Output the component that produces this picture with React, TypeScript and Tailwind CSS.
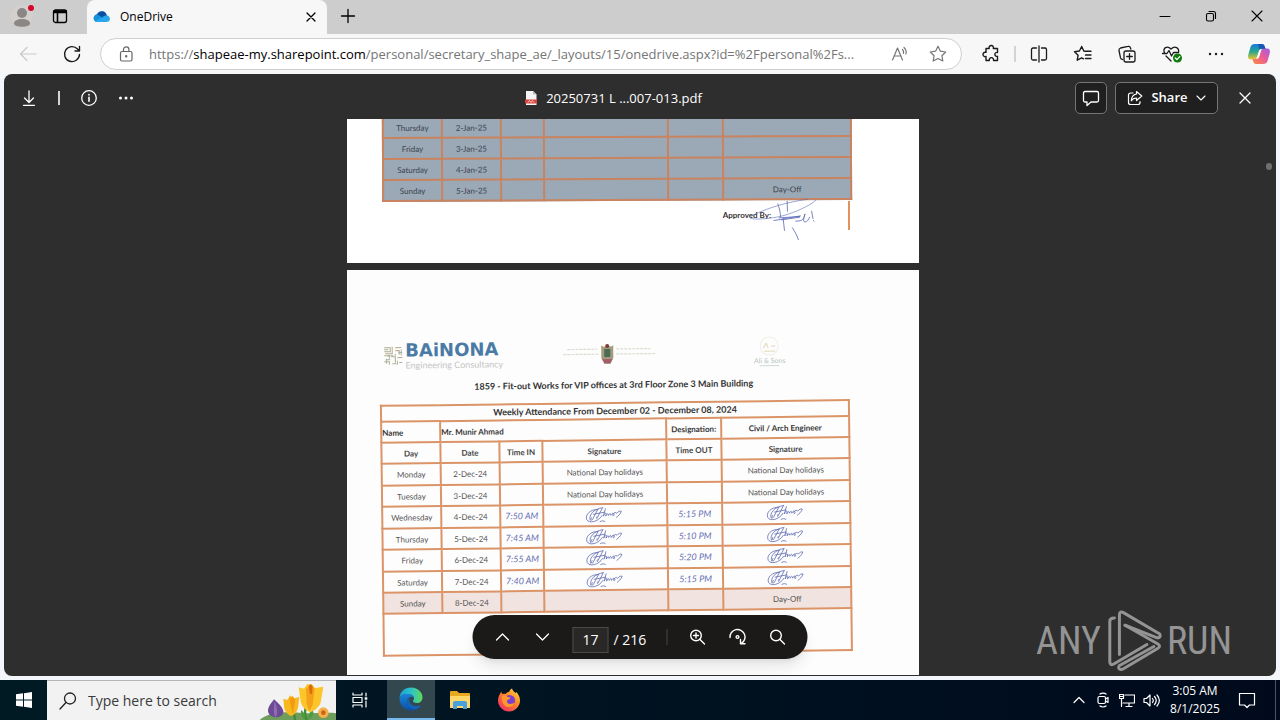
import React from "react";

type IconProps = { children: React.ReactNode; size?: string; box?: string; sw?: number };

function Icon({ children, size = "size-5", box = "0 0 20 20", sw = 1.1 }: IconProps) {
  return (
    <svg className={`${size} shrink-0`} viewBox={box} fill="none" stroke="currentColor" strokeWidth={sw} strokeLinecap="round" strokeLinejoin="round" aria-hidden="true">
      {children}
    </svg>
  );
}

function ToolButton({ label, children, className = "w-11" }: { label: string; children: React.ReactNode; className?: string }) {
  return (
    <button type="button" aria-label={label} className={`flex h-8 shrink-0 items-center justify-center ${className}`}>
      {children}
    </button>
  );
}

function TabStrip() {
  return (
    <header className="flex h-[34px] shrink-0 items-stretch bg-[#cdcdcd] text-black">
      <ToolButton label="Profile" className="w-11">
        <svg className="size-6" viewBox="0 0 24 24" aria-hidden="true">
          <circle cx="12" cy="12" r="11" fill="#d3d0cd" />
          <circle cx="12" cy="9" r="5" fill="#8b8785" />
          <path d="M4 19.500c0-3 3.500-4.500 8-4.500s8 1.500 8 4.500c0 2-3.500 3.300-8 3.300s-8-1.300-8-3.300z" fill="#8b8785" />
          <circle cx="21" cy="4" r="3" fill="#d4082e" />
        </svg>
      </ToolButton>
      <ToolButton label="Tab actions" className="mr-[11px] w-8">
        <Icon size="size-4" box="0 0 16 16" sw={1.3}>
          <rect x="1.500" y="2" width="13" height="12.500" rx="2" />
          <path d="M2 3h12M2 4.500h12M5.500 5v9" strokeWidth="1.600" />
        </Icon>
      </ToolButton>
      <div className="flex w-60 items-center rounded-t-lg bg-[#f7f7f7] pl-[6px] pr-2">
        <svg className="h-4 w-[18px]" viewBox="0 0 36 24" aria-hidden="true">
          <path d="M9 22a8 8 0 0 1-1-15.500A10 10 0 0 1 27 8l2 5-20 9z" fill="#0f62c0" />
          <path d="M8 7c5-1 10 2 20 9l-20 6A7.500 7.500 0 0 1 2 11c1-2 3-3.500 6-4z" fill="#1490df" />
          <path d="M4 20l15-7c3-5 9-6 13-2 4 5 1 11-5 11H9c-2 0-4-1-5-2z" fill="#28a8ea" />
          <path d="M13 3c6-4 13-1 14.500 6-4-1-7 1-8.500 4L9 7z" fill="#0c4f9e" />
        </svg>
        <span className="ml-[9px] flex-1 text-[12px] leading-4">OneDrive</span>
        <button type="button" aria-label="Close tab" className="flex size-4 items-center justify-center">
          <Icon size="size-3" box="0 0 12 12" sw={1.3}><path d="M2 2l8 8M10 2l-8 8" /></Icon>
        </button>
      </div>
      <ToolButton label="New tab" className="w-[42px]">
        <Icon size="size-4" box="0 0 16 16" sw={1.300}><path d="M8 1.500v13M1.500 8h13" /></Icon>
      </ToolButton>
      <div className="flex-1" />
      <ToolButton label="Minimize" className="w-[46px]">
        <Icon size="size-3" box="0 0 12 12" sw={1}><path d="M1 6.500h10" /></Icon>
      </ToolButton>
      <ToolButton label="Restore" className="w-[46px]">
        <Icon size="size-3" box="0 0 12 12" sw={1.100}>
          <rect x="1.500" y="3.500" width="7" height="7.500" rx="1.500" />
          <path d="M4 1.500h4.500a2 2 0 0 1 2 2V8.500" />
        </Icon>
      </ToolButton>
      <ToolButton label="Close" className="w-[46px]">
        <Icon size="size-3" box="0 0 12 12" sw={1.100}><path d="M1 1l10 10M11 1L1 11" /></Icon>
      </ToolButton>
    </header>
  );
}

function AddressBar() {
  return (
    <div className="flex h-10 shrink-0 items-center bg-[#f7f7f7] pl-[6px] text-[#1b1b1b]">
      <ToolButton label="Back">
        <span className="text-[#c9c9c9]"><Icon sw={1.200}><path d="M18 10H2.500M9 3.500L2.500 10l6.500 6.500" /></Icon></span>
      </ToolButton>
      <ToolButton label="Refresh">
        <Icon sw={1.400}><path d="M17.500 10.500A7.500 7.500 0 1 1 15.500 5l2 2M17.500 2.500V7H13" /></Icon>
      </ToolButton>
      <div className="ml-[6px] flex h-8 min-w-0 flex-1 items-center rounded-full border border-[#cfcfcf] bg-white pl-[17px] pr-[5px]">
        <span className="mr-[15px] text-[#666]">
          <Icon size="size-4" box="0 0 16 16" sw={1.200}>
            <rect x="2.500" y="5.500" width="11.500" height="9.500" rx="1.500" />
            <path d="M5.500 5.500V3.500a2.700 2.700 0 0 1 5.400 0v2" />
            <circle cx="8.200" cy="10.300" r="0.600" fill="currentColor" />
          </Icon>
        </span>
        <a href="#document" className="min-w-0 flex-1 truncate text-[13px] leading-5 text-[#757575]">
          https://<span className="text-black">shapeae-my.sharepoint.com</span>/personal/secretary_shape_ae/_layouts/15/onedrive.aspx?id=%2Fpersonal%2Fs...
        </a>
        <span className="flex pl-2 text-[#767676]">
          <ToolButton label="Read aloud" className="w-10">
            <Icon sw={1.200}>
              <path d="M2.500 16L7.500 4l5 12M4.300 12h6.400M12.500 5.500c1 1 1.300 2.200 1 3.800M14 3.500c1.900 1.700 2.500 4 2 6.500" />
            </Icon>
          </ToolButton>
          <ToolButton label="Add to favorites" className="w-9">
            <Icon sw={1.200}><path d="M10 2.300l2.400 4.900 5.300.8-3.800 3.700.9 5.300-4.800-2.500L5.200 17l.9-5.300L2.300 8l5.300-.8z" /></Icon>
          </ToolButton>
        </span>
      </div>
      <div className="ml-[7px] flex items-center">
        <ToolButton label="Extensions">
          <Icon sw={1.400}>
            <path d="M5 4.500h3.200a2.200 2.200 0 1 1 4.100 0H16.500v4a2 2 0 1 0 0 3.800V16.500h-4a2.200 2.200 0 1 0-4.200 0H5v-4a2.200 2.200 0 1 1 0-4.100z" />
          </Icon>
        </ToolButton>
        <span className="mx-[1px] h-4 w-[2px] bg-[#d3d3d3]" />
        <ToolButton label="Split screen">
          <Icon sw={1.300}><path d="M10 2v16M7.500 4H4a1.500 1.500 0 0 0-1.500 1.500v9A1.500 1.500 0 0 0 4 16h3.500M12.500 4H16a1.500 1.500 0 0 1 1.500 1.500v9A1.500 1.500 0 0 1 16 16h-3.500" /></Icon>
        </ToolButton>
        <ToolButton label="Favorites">
          <Icon sw={1.400}><path d="M12 7.300H18M12.500 11H18M12.500 14.500H18M12 7.200L10.800 7 8.700 2.500 6.400 7l-4.900.7 3.600 3.500-.9 5 4.500-2.400 1.800 1" /></Icon>
        </ToolButton>
        <ToolButton label="Collections">
          <Icon sw={1.300}>
            <rect x="7" y="7" width="11" height="11" rx="2" />
            <path d="M12.500 9.700v5.600M9.700 12.500h5.600M5.500 15.500c-1 0-1.700-.7-2-1.600L2 6.500C1.800 5.300 2.400 4.400 3.500 4l7.500-1.600c1.200-.3 2.200.4 2.500 1.600l.3 1.200" />
          </Icon>
        </ToolButton>
        <ToolButton label="Browser essentials">
          <Icon size="size-6" box="-1 0 24 24" sw={1.300}>
            <path d="M4.500 11C2.500 6 7 3 11 7c4-4 8.500-1 7.500 3.500M6 14l5 5M2.500 11.500H7l2-3 2.500 5.500 2-3.500h4" />
            <circle cx="17.500" cy="16" r="4.500" fill="#107c10" stroke="none" />
            <path d="M15.300 16l1.600 1.600 2.800-3" stroke="white" />
          </Icon>
        </ToolButton>
        <ToolButton label="Settings and more">
          <Icon sw={0}>
            <g fill="currentColor"><circle cx="5" cy="10" r="1.200" /><circle cx="11" cy="10" r="1.200" /><circle cx="17" cy="10" r="1.200" /></g>
          </Icon>
        </ToolButton>
        <ToolButton label="Copilot" className="w-[43px]">
          <svg className="size-6" viewBox="0 0 24 24" aria-hidden="true">
            <defs>
              <linearGradient id="cpA" x1="0" y1="0" x2="0" y2="1"><stop offset="0" stopColor="#1679db" /><stop offset=".5" stopColor="#29a88d" /><stop offset="1" stopColor="#f4c42e" /></linearGradient>
              <linearGradient id="cpB" x1="1" y1="0" x2="0" y2="1"><stop offset="0" stopColor="#a05be8" /><stop offset=".5" stopColor="#ee5c93" /><stop offset="1" stopColor="#fb8b3c" /></linearGradient>
            </defs>
            <path d="M8 2h7c1.500 0 2.300 1 2.700 2.500L18.500 7H15c-2 0-3 1-3.500 3L10 15c-.4 1.600-1.200 2.500-3 2.500H4C1.500 17.500.6 15.500 1.200 13L3.500 5C4 3 5.500 2 8 2z" fill="url(#cpA)" />
            <path d="M16 22H9c-1.500 0-2.300-1-2.700-2.500L5.500 17H9c2 0 3-1 3.500-3L14 9c.4-1.600 1.200-2.500 3-2.500h3c2.500 0 3.400 2 2.800 4.500L20.500 19c-.5 2-2 3-4.500 3z" fill="url(#cpB)" />
            <path d="M11 2h4c1.500 0 2.300 1 2.700 2.500l.8 2.300H15c-1 0-1.800.3-2.400 1z" fill="#1857b8" />
            <path d="M10.500 15l2-6.500c.4-1 1-1.500 2-1.500-.5.600-.7 1.200-1 2l-1.600 5.500c-.3 1.300-.8 2-1.900 2.500z" fill="#fff" />
          </svg>
        </ToolButton>
      </div>
    </div>
  );
}

function ViewerHeader() {
  return (
    <div className="flex h-[45px] shrink-0 items-center pt-[2px] text-white">
      <div className="flex w-[147px] items-center">
        <ToolButton label="Download" className="ml-[5px] w-10">
          <Icon size="size-4" box="0 0 16 16" sw={1.300}><path d="M8 1v11M3.500 8L8 12.500 12.500 8M2.500 15.300h11" /></Icon>
        </ToolButton>
        <svg className="mx-[9px] h-4 w-[2px]" viewBox="0 0 2 16" aria-hidden="true"><path d="M1 1v14" stroke="currentColor" strokeWidth="1.600" /></svg>
        <ToolButton label="Information" className="w-10">
          <Icon size="size-4" box="0 0 16 16" sw={1.300}><circle cx="8" cy="8" r="7.300" /><path d="M8 7.200v4M8 4.600v.3" strokeWidth="1.600" /></Icon>
        </ToolButton>
        <ToolButton label="More actions" className="w-[34px]">
          <Icon size="size-4" box="0 0 16 16" sw={0}><g fill="currentColor"><circle cx="2.500" cy="8" r="1.500" /><circle cx="8" cy="8" r="1.500" /><circle cx="13.500" cy="8" r="1.500" /></g></Icon>
        </ToolButton>
      </div>
      <h1 className="flex min-w-0 flex-1 items-center justify-center gap-2 text-[13px] font-medium leading-5">
        <svg className="h-4 w-[14px]" viewBox="0 0 14 16" aria-hidden="true">
          <path d="M2 1h7l3.500 3.500V15H2z" fill="#f4f4f4" />
          <path d="M9 1v3.500h3.500z" fill="#bdbdbd" />
          <rect x="1" y="9.500" width="12" height="4" rx="1" fill="#d9453c" />
          <path d="M4 12.500l1.500-2 1.500 2 1.500-2 1.500 2" stroke="#f9d5d2" strokeWidth="0.800" fill="none" />
        </svg>
        <span>20250731 L ...007-013.pdf</span>
      </h1>
      <div className="flex items-center">
        <button type="button" aria-label="Comments" className="flex size-8 items-center justify-center rounded-[5px] border border-[#757575] bg-[#1f1f1f]">
          <Icon size="size-[18px]" box="0 0 18 18" sw={1.300}><path d="M3 2.500h12A1.500 1.500 0 0 1 16.500 4v7.500A1.500 1.500 0 0 1 15 13H9l-4 3.500V13H3a1.500 1.500 0 0 1-1.500-1.500V4A1.500 1.500 0 0 1 3 2.500z" /></Icon>
        </button>
        <button type="button" className="ml-2 flex h-8 w-[103px] items-center justify-center gap-2 rounded-[5px] border border-[#757575] bg-[#1f1f1f] text-[13px] font-semibold">
          <Icon size="size-4" box="0 0 16 16" sw={1.200}>
            <path d="M6 3H3.500A2 2 0 0 0 1.500 5v7.500a2 2 0 0 0 2 2H11a2 2 0 0 0 2-2V11.500M9.500 1.500L14.800 6l-5.300 4.500V8C7 8 5.500 8.800 4.300 10.800 4.500 7 6.500 4.500 9.500 4z" />
          </Icon>
          Share
          <Icon size="size-[10px]" box="0 0 10 10" sw={1.100}><path d="M1 3l4 4 4-4" /></Icon>
        </button>
        <ToolButton label="Close viewer" className="ml-[7px] mr-[11px] w-10">
          <Icon size="size-3" box="0 0 12 12" sw={1.300}><path d="M1 1l10 10M11 1L1 11" /></Icon>
        </ToolButton>
      </div>
    </div>
  );
}

function Columns() {
  return (
    <colgroup>
      <col className="w-[59px]" />
      <col className="w-[59px]" />
      <col className="w-[43px]" />
      <col className="w-[124px]" />
      <col className="w-[55px]" />
      <col className="w-[128px]" />
    </colgroup>
  );
}

const januaryDays = [
  ["Thursday", "2-Jan-25"],
  ["Friday", "3-Jan-25"],
  ["Saturday", "4-Jan-25"],
  ["Sunday", "5-Jan-25"],
];

const edge = "border-2 border-[#c9835f] p-0";

function JanuaryPage() {
  return (
    <section className="flex h-[144px] w-[572px] shrink-0 flex-col justify-end overflow-hidden bg-white pl-[35px] font-['Lato',sans-serif] text-[8px] leading-[10px] text-[#3a4450]">
      <div className="w-[468px] shrink-0 -rotate-[0.25deg]">
        <table className="w-full table-fixed border-collapse bg-[#9ba8b5] text-center">
          <Columns />
          <tbody>
            {januaryDays.map(([day, date]) => (
              <tr key={day} className="h-[21px]">
                <td className={edge}>{day}</td>
                <td className={edge}>{date}</td>
                <td className={edge} />
                <td className={edge} />
                <td className={edge} />
                <td className={edge}>{day === "Sunday" ? "Day-Off" : ""}</td>
              </tr>
            ))}
          </tbody>
        </table>
      </div>
      <div className="relative mb-[33px] h-[29px] w-[468px] shrink-0 border-r-2 border-[#e0925f] pt-[9px] text-right font-bold text-[#333]">
        <p className="pr-[77px]">Approved By:</p>
        <svg className="absolute -top-[5px] right-[28px] h-[48px] w-[77px]" viewBox="340 260 230 145" fill="none" stroke="#5b6ab8" strokeWidth="2.500" strokeLinecap="round" aria-hidden="true">
          <path d="M535 270C450 280 375 312 360 324c-6 10 70 6 112-8 45-15 75-32 88-44" strokeWidth="1.800" />
          <path d="M444 284c4 12 8 24 8 38M472 276l1 30M460 328l4 36M488 356c8 12 14 24 18 36" />
          <path d="M432 334c30-4 55-10 80-14M448 326l62-4M455 332l55-8M498 336c14 0 22-2 26-14l2-8c-4 12-6 22-2 24 8 2 12-6 16-14M546 306l4 22M552 334l1 2" />
        </svg>
      </div>
    </section>
  );
}

function Signature() {
  return (
    <svg className="mx-auto h-[18px] w-[37px]" viewBox="0 0 110 54" fill="none" stroke="#6670b4" strokeWidth="2.500" strokeLinecap="round" strokeLinejoin="round" role="img" aria-label="Signed">
      <path d="M38 10C14 8-2 26 4 40c6 12 34 8 46-12M14 42C8 26 26 8 50 5M36 12L22 38c-4 8-8 2-4-4M52 4L36 34c-2 6-4 2-2-2M24 24l34-6" />
      <path d="M60 8l-6 22c4-10 8-12 8-6l-1 6c5-9 8-9 8-2 4-8 7-7 7 0 4-8 9-8 10-2 1 4-6 4-4-1 4-6 10-7 12-3 4-5 10-8 14-6-4 10-10 14-15 18M44 46c6-3 10-2 14 0" />
    </svg>
  );
}

type Entry = { day: string; date: string; timeIn?: string; timeOut?: string; note?: string };

const entries: Entry[] = [
  { day: "Monday", date: "2-Dec-24", note: "National Day holidays" },
  { day: "Tuesday", date: "3-Dec-24", note: "National Day holidays" },
  { day: "Wednesday", date: "4-Dec-24", timeIn: "7:50 AM", timeOut: "5:15 PM" },
  { day: "Thursday", date: "5-Dec-24", timeIn: "7:45 AM", timeOut: "5:10 PM" },
  { day: "Friday", date: "6-Dec-24", timeIn: "7:55 AM", timeOut: "5:20 PM" },
  { day: "Saturday", date: "7-Dec-24", timeIn: "7:40 AM", timeOut: "5:15 PM" },
];

const line = "border-2 border-[#db9467] p-0";
const signed = "border-2 border-[#db9467] p-0 pr-1";
const written = "border-2 border-[#db9467] p-0 text-[9px] italic text-[#6670b4] whitespace-nowrap";

function Letterhead() {
  return (
    <div className="flex h-[38px] items-center justify-between">
      <div className="flex items-center pl-1">
        <svg className="h-5 w-5" viewBox="0 0 20 20" fill="none" strokeWidth="1" aria-hidden="true">
          <path d="M1 2h6v4H1M9 1v7H2M12 2h6M12 5h4v4M1 10h5v3M8 11h4v6M1 16h5v3M14 12h5M14 15v4" stroke="#b8a98c" />
          <path d="M18 4v6M10 10H4M3 13v5M9 18h4M16 17h3M12 8v2M1 4h4M15 7h4M7 14H3" stroke="#9db49f" />
        </svg>
        <div className="ml-[2px]">
          <p className="font-['DejaVu_Sans',sans-serif] text-[18px] font-bold leading-[18px] text-[#4a7ba6]">BAiNONA</p>
          <p className="text-[9px] leading-[11px] text-[#c4c4c4]">Engineering Consultancy</p>
        </div>
      </div>
      <svg className="mr-10 h-6 w-[100px]" viewBox="0 0 100 24" aria-hidden="true">
        <path d="M9 8h30M5 13h35M58 8h34M58 13h39" stroke="#dedccf" strokeWidth="1.200" strokeDasharray="3 1" />
        <path d="M43 4c2 2 3 2 6 0 3 2 4 2 6 0v13l-3 6h-6l-3-6z" fill="#a39c7a" />
        <path d="M46 8h6v8h-6z" fill="#4c6b55" />
        <circle cx="49" cy="5" r="2" fill="#7d3b3b" />
        <path d="M44 18h10l-2 4h-6z" fill="#a65b6d" />
      </svg>
      <div className="mr-[62px] flex flex-col items-center text-[7px] leading-[8px] text-[#b4c4c0]">
        <svg className="h-5 w-7" viewBox="0 0 28 20" fill="none" aria-hidden="true">
          <circle cx="14" cy="10" r="9" stroke="#f1eee2" />
          <path d="M8 12l3-5 2 5M16 10h4M9 15h11" stroke="#e0d6b6" />
        </svg>
        <span>Ali &amp; Sons</span>
        <svg className="h-[3px] w-5" viewBox="0 0 20 3" aria-hidden="true"><path d="M0 1.500h20" stroke="#ccdad6" /></svg>
      </div>
    </div>
  );
}

function DecemberPage() {
  return (
    <section className="min-h-0 w-[572px] flex-1 overflow-hidden bg-[#fdfdfd] pl-[34px] pt-16 font-['Lato',sans-serif] text-[8px] leading-[10px] text-[#555]">
      <div className="w-[468px] -rotate-[0.7deg]">
        <Letterhead />
        <h2 className="mt-[6px] mb-[11px] text-center text-[9px] font-bold leading-[13px] text-[#333]">
          1859 - Fit-out Works for VIP offices at 3rd Floor Zone 3 Main Building
        </h2>
        <table className="w-full table-fixed border-collapse text-center">
          <Columns />
          <tbody>
            <tr className="h-4 text-[9px] text-[#333]">
              <th colSpan={6} className={line}>Weekly Attendance From December 02 - December 08, 2024</th>
            </tr>
            <tr className="h-[21px] text-[#333]">
              <th className={`${line} text-left`}>Name</th>
              <th colSpan={3} className={`${line} text-left`}>Mr. Munir Ahmad</th>
              <th className={line}>Designation:</th>
              <th className={line}>Civil / Arch Engineer</th>
            </tr>
            <tr className="h-[21px] text-[#444]">
              <th className={line}>Day</th>
              <th className={line}>Date</th>
              <th className={line}>Time IN</th>
              <th className={line}>Signature</th>
              <th className={line}>Time OUT</th>
              <th className={line}>Signature</th>
            </tr>
            {entries.map((e, i) => (
              <tr key={e.day} className={i % 2 ? "h-[21px]" : "h-[22px]"}>
                <td className={line}>{e.day}</td>
                <td className={line}>{e.date}</td>
                <td className={written}>{e.timeIn}</td>
                <td className={e.note ? line : signed}>{e.note ?? <Signature />}</td>
                <td className={written}>{e.timeOut}</td>
                <td className={e.note ? line : signed}>{e.note ?? <Signature />}</td>
              </tr>
            ))}
            <tr className="h-[21px] bg-[#f1e3e0]">
              <td className={line}>Sunday</td>
              <td className={line}>8-Dec-24</td>
              <td className={line} />
              <td className={line} />
              <td className={line} />
              <td className={line}>Day-Off</td>
            </tr>
            <tr className="h-[42px]">
              <td colSpan={6} className={line} />
            </tr>
          </tbody>
        </table>
      </div>
    </section>
  );
}

function PageControls() {
  return (
    <div className="absolute bottom-[17px] left-1/2 flex h-11 w-[335px] -translate-x-1/2 items-center rounded-full bg-[#1b1a19] pl-[10px] text-white shadow-lg">
      <ToolButton label="Previous page" className="w-10">
        <Icon size="size-[14px]" box="0 0 14 14" sw={1.300}><path d="M1 10l6-6 6 6" /></Icon>
      </ToolButton>
      <ToolButton label="Next page" className="w-10">
        <Icon size="size-[14px]" box="0 0 14 14" sw={1.300}><path d="M1 4l6 6 6-6" /></Icon>
      </ToolButton>
      <label className="ml-[10px] mt-[5px] flex items-center text-[14px] leading-5">
        <input aria-label="Page number" defaultValue="17" className="h-[26px] w-9 border border-[#4a4a4a] bg-[#292827] text-center text-[14px] text-white" />
        <span className="ml-[5px] w-10 whitespace-nowrap">/ 216</span>
      </label>
      <span className="ml-[13px] h-4 w-px bg-[#444]" />
      <ToolButton label="Zoom in" className="ml-[10px] w-10">
        <Icon size="size-4" box="0 0 16 16" sw={1.400}><circle cx="6.500" cy="6.500" r="5.300" /><path d="M10.500 10.500l4.500 4.500M6.500 4v5M4 6.500h5" /></Icon>
      </ToolButton>
      <ToolButton label="Rotate" className="w-10">
        <Icon size="size-[18px]" box="0 0 18 18" sw={1.400}><path d="M1.500 9.500A7.500 7.500 0 1 1 13 15.300M12 11.500v4.300h4.500" /><circle cx="9" cy="9" r="1.400" /></Icon>
      </ToolButton>
      <ToolButton label="Find in document" className="w-10">
        <Icon size="size-4" box="0 0 16 16" sw={1.400}><circle cx="6.500" cy="6.500" r="5.300" /><path d="M10.500 10.500l4.500 4.500" /></Icon>
      </ToolButton>
    </div>
  );
}

function Watermark() {
  return (
    <div className="absolute bottom-1 right-[44px] flex h-[62px] items-center font-['Roboto_Condensed','Liberation_Sans_Narrow',Roboto,sans-serif] text-[38px] leading-none text-[#949494]">
      <span>ANY</span>
      <svg className="ml-[6px] mr-1 h-[62px] w-[56px]" viewBox="268 28 168 187" fill="none" stroke="currentColor" strokeWidth="9" strokeLinejoin="round" strokeLinecap="round" aria-hidden="true">
        <path d="M290 52c-8 0-14 2-14 10v122c0 8 5 11 12 7l100-59" />
        <path d="M305 162V42c0-8 5-10 12-6l106 62c8 4 6 14-4 14L322 74" />
        <path d="M322 74l98 56c8 5 8 9 0 14l-104 62c-8 4-16 0-12-10l105-58" />
      </svg>
      <span>RUN</span>
    </div>
  );
}

function Flowers() {
  return (
    <svg className="h-[38px] w-[77px] shrink-0 self-end" viewBox="745 34 231 114" preserveAspectRatio="xMidYMax meet" aria-hidden="true">
      <path d="M745 150c20-22 70-28 120-24s90-2 111 2v22z" fill="#6f9e5c" />
      <path d="M848 120l6 30M888 100c-8 20-4 34 0 50" stroke="#3e8b3a" strokeWidth="7" fill="none" />
      <path d="M905 120c8 4 2 20-12 28 0-14 2-24 12-28zM872 118c10 8 14 20 12 30-10-6-16-16-12-30z" fill="#4b9d3f" />
      <path d="M790 86c-8 12-18 20-18 36 2 14 16 18 26 18 12-2 22-8 20-20-4-12-14-22-28-34z" fill="#6c4a94" />
      <path d="M790 90c2 14-4 34 4 50 8-8 8-30-4-50z" fill="#8e6bb5" />
      <path d="M818 84l12 4 8-14 10 10 18-6-4 34c-4 14-12 22-20 24-12-4-22-16-22-30z" fill="#f8b91e" />
      <path d="M836 84l10-8 8 12-8 44z" fill="#f39a12" />
      <path d="M864 50l16 4 10-14 14 2 10 10 24-4-8 48c-6 16-22 26-32 28-14-4-26-18-28-32z" fill="#fcc62a" />
      <path d="M886 54l14-12 12 14-6 46-10 20-8-22z" fill="#f5a01a" />
      <path d="M894 46l6-6 6 6-2 24h-6z" fill="#d96c0c" />
      <circle cx="938" cy="126" r="16" fill="#f6b04a" />
      <circle cx="938" cy="126" r="7" fill="#c8641c" />
    </svg>
  );
}

function Taskbar() {
  return (
    <footer className="flex h-10 shrink-0 items-stretch bg-linear-to-r from-[#001a24] to-[#000a1c] text-white">
      <button type="button" aria-label="Start" className="flex w-[47px] items-center justify-center">
        <svg className="size-4" viewBox="0 0 16 16" fill="white" aria-hidden="true">
          <path d="M0 2.300l7-1v6.300H0zM8 1.200L16 0v7.600H8zM0 8.500h7v6.300l-7-1zM8 8.500h8V16l-8-1.200z" />
        </svg>
      </button>
      <label className="flex w-[289px] items-center border-t border-[#b5b5b5] bg-[#f2f2f2] pl-3 text-[#222]">
        <Icon size="size-[18px]" box="0 0 18 18" sw={1.300}><circle cx="11" cy="6.500" r="5.500" /><path d="M7 10.500L1 17" /></Icon>
        <input type="text" aria-label="Search" placeholder="Type here to search" className="ml-[11px] min-w-0 flex-1 bg-transparent text-[14px] leading-5 placeholder:text-[#3a3a3a]" />
        <Flowers />
      </label>
      <button type="button" aria-label="Task view" className="flex w-[51px] items-center justify-center pr-[3px]">
        <Icon size="size-4" box="0 0 16 16" sw={1.200}>
          <path d="M1 1v2h9V1M1 5.500h9v5H1zM1 15v-2h9v2M14 1v3M14 9v6" />
          <path d="M12.700 5.300h2.600v2.400h-2.600z" fill="currentColor" strokeWidth="0" />
        </Icon>
      </button>
      <button type="button" aria-label="Microsoft Edge" className="flex w-12 items-center justify-center border-b-2 border-[#76b9ed] bg-[#33474f]">
        <svg className="size-6" viewBox="0 0 24 24" aria-hidden="true">
          <defs>
            <linearGradient id="edTop" x1="0" y1="0" x2="1" y2="0"><stop offset="0" stopColor="#1c9fe0" /><stop offset=".55" stopColor="#2fc5c0" /><stop offset="1" stopColor="#62d95a" /></linearGradient>
            <linearGradient id="edLow" x1="0" y1="0" x2="0" y2="1"><stop offset="0" stopColor="#1a86d8" /><stop offset="1" stopColor="#0c4fa5" /></linearGradient>
          </defs>
          <path d="M.5 11C1 4.500 6 .5 12 .5 18.500.5 23.500 5 23.500 10.500c0 3.500-2.500 5.500-5.500 5.500-2.500 0-4-1-4-2 0-.8 1-1 1-2.800C15 9 12.500 7 9 7 5 7 1.500 8.500.5 11z" fill="url(#edTop)" />
          <path d="M.5 11C1.500 8.500 5 7 9 7c3.500 0 6 2 6 4.200-1-1.200-2.500-1.600-4-1.200-2.500.8-3.500 3-3 5.500.8 4 4.500 6 8.500 5.500 2-.3 3.500-1 4.500-1.500-2 2.800-5.500 4.200-9 4C5.500 23.500.2 18 .5 11z" fill="url(#edLow)" />
          <path d="M8 15.500C7.500 13 9 10.500 11 10c-1.500 2-1 6.500 3 8.500 2.500 1.200 5 .8 7 0 .5-.2.800.2.500.6C20 21 18.500 21.500 16.500 22 12 22 8.800 19.500 8 15.500z" fill="#1563b8" />
        </svg>
      </button>
      <button type="button" aria-label="File Explorer" className="flex w-[49px] items-center justify-center">
        <svg className="h-5 w-[22px]" viewBox="0 0 22 20" aria-hidden="true">
          <path d="M1 2a1 1 0 0 1 1-1h6l2 2h10a1 1 0 0 1 1 1v14H1z" fill="#e8a820" />
          <path d="M1 6h20v12H1z" fill="#ffd869" />
          <path d="M4 19v-6a2 2 0 0 1 2-2h10a2 2 0 0 1 2 2v6h-4v-3H8v3z" fill="#4aa0dc" />
        </svg>
      </button>
      <button type="button" aria-label="Firefox" className="flex w-[50px] items-center justify-center">
        <svg className="size-6" viewBox="0 0 24 24" aria-hidden="true">
          <defs>
            <linearGradient id="ffx" x1="1" y1="0" x2=".2" y2="1"><stop offset="0" stopColor="#ffe34a" /><stop offset=".45" stopColor="#ff8a25" /><stop offset="1" stopColor="#f02c6b" /></linearGradient>
          </defs>
          <path d="M4.500 3.500c0 1.500.3 2 1 2.500 1-.3 2-.4 3 0C9.500 4.500 11 4 12 4c1-2 1.500-3 3-3.500.5 2 2 3 3.500 4.500l1-1c2 2.500 3.500 5 3.500 8.500C23 18.500 18 23.500 12 23.500S1 18.500 1 12.500C1 9 2.500 6 4.500 3.500z" fill="url(#ffx)" />
          <circle cx="12.500" cy="12.500" r="5.500" fill="#7a3fd0" />
          <path d="M5 8.500c2-1.500 4-1 5.500.5 1.500.2 2.500.5 3 1-1 1.500-2.500 1.500-3.500 2.500-.5 2 1 3.500 3 3.500 2 0 3-1 4.500-1-1 3-3.500 4.500-6.500 4-4-.5-6.500-5-6-10.500z" fill="#ff9a2a" />
        </svg>
      </button>
      <div className="flex-1" />
      <div className="flex items-center" aria-label="System tray">
        <ToolButton label="Show hidden icons" className="w-6"><Icon size="size-3" box="0 0 12 12" sw={1.200}><path d="M1 8.500l5-5 5 5" /></Icon></ToolButton>
        <ToolButton label="Camera" className="w-6">
          <Icon size="size-4" box="0 0 16 16" sw={1.200}><rect x="3" y="4.500" width="7.500" height="7" rx="1.500" /><path d="M10.500 7l2.500-1.500v5L10.500 9M5 2c1.500-1.300 4.500-1.300 6 0M5 14c1.500 1.300 4.500 1.300 6 0" /></Icon>
        </ToolButton>
        <ToolButton label="Network" className="w-6">
          <Icon size="size-4" box="0 0 16 16" sw={1.200}><path d="M6 3h9.500v8H4M10 11v3.500M7 14.500h6M.5 2.500h4v4h-4zM2.500 6.500v8M.5 4.500h4" /></Icon>
        </ToolButton>
        <ToolButton label="Volume" className="w-6">
          <Icon size="size-[17px]" box="0 0 17 17" sw={1.200}><path d="M1 6.500h2.500L7 3v11L3.500 10.500H1zM9.500 6.500c1 1.300 1 2.700 0 4M11.500 4.500c2.200 2.500 2.200 5.500 0 8M14 3c3 3.500 3 7.500 0 11" /></Icon>
        </ToolButton>
        <div className="w-16 text-center text-[12px] leading-[18px]">
          <p>3:05 AM</p>
          <p>8/1/2025</p>
        </div>
        <ToolButton label="Notifications" className="w-10">
          <Icon size="size-[18px]" box="0 0 18 18" sw={1.200}><path d="M1.500 2.500h15v11.500H11.500L9 16.500 6.500 14h-5z" /></Icon>
        </ToolButton>
        <span className="ml-2 mr-1 h-10 w-px bg-[#4a5560]" />
      </div>
    </footer>
  );
}

export default function App() {
  return (
    <div className="flex h-screen flex-col overflow-hidden bg-[#f3f6fa] font-['Open_Sans',sans-serif]">
      <TabStrip />
      <AddressBar />
      <main id="document" className="relative mx-1 mb-1 flex min-h-0 flex-1 flex-col overflow-hidden rounded-lg bg-[#2e2e2e]">
        <ViewerHeader />
        <div className="mb-px flex min-h-0 flex-1">
          <div className="flex min-w-0 flex-1 flex-col items-center gap-[7px]">
            <JanuaryPage />
            <DecemberPage />
          </div>
          <div className="flex w-[14px] flex-col items-center pt-11">
            <span className="h-[7px] w-[6px] rounded-full bg-[#707070]" />
          </div>
        </div>
        <PageControls />
        <Watermark />
      </main>
      <Taskbar />
    </div>
  );
}
